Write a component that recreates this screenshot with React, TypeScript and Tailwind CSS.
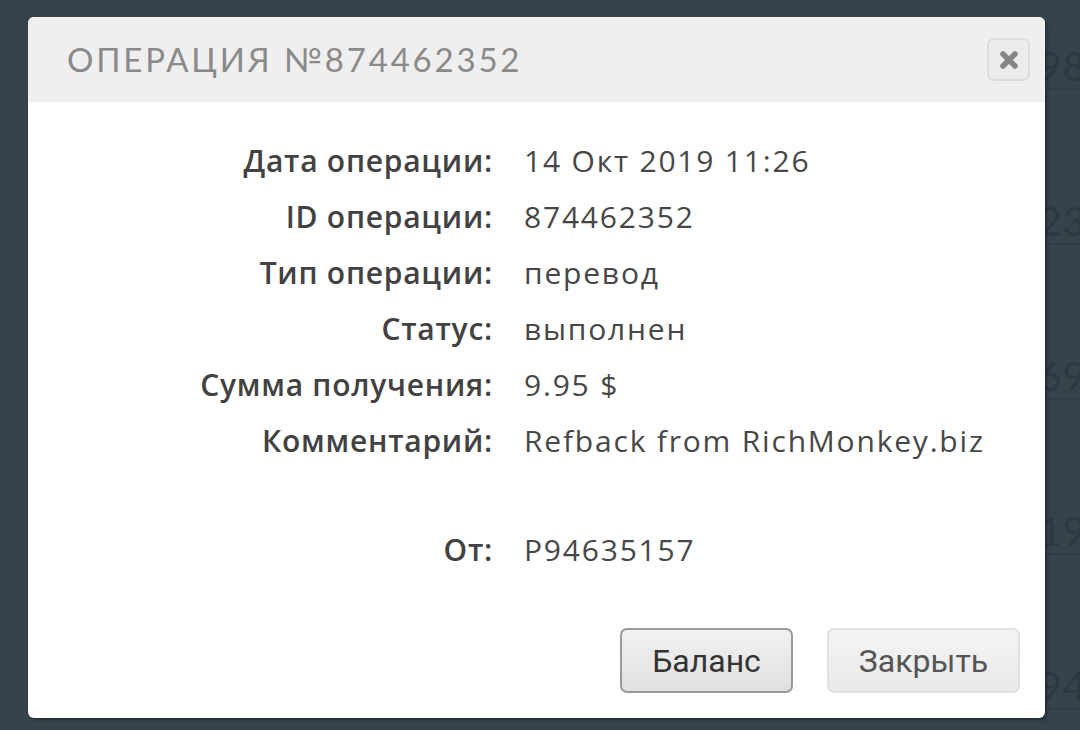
import React from 'react'

const rows = [
  { label: 'Дата операции:', value: '14 Окт 2019 11:26' },
  { label: 'ID операции:', value: '874462352' },
  { label: 'Тип операции:', value: 'перевод' },
  { label: 'Статус:', value: 'выполнен' },
  { label: 'Сумма получения:', value: '9.95 $' },
  { label: 'Комментарий:', value: 'Refback from RichMonkey.biz' },
]

// what peeks out from the page behind the dialog
const bgNumbers = ['1598', '4523', '7169', '2319', '5394']

export default function App() {
  return (
    <div className="relative w-[1080px] h-[730px] overflow-hidden bg-[#36434b]">
      <div className="flex flex-col pt-[44px] pl-[990px]">
        {bgNumbers.map((n) => (
          <div key={n} className="h-[155px]">
            <span className="inline-block text-[40px] leading-[44px] text-[#2d3941] border-b-2 border-dotted border-[#2d3941] tracking-wide" style={{ fontFamily: 'Lato, sans-serif' }}>
              {n}
            </span>
          </div>
        ))}
      </div>

      <div className="absolute left-[28px] top-[17px] w-[1017px] h-[701px] flex flex-col rounded-[6px] overflow-hidden bg-white shadow-[2px_2px_3px_rgba(0,0,0,0.35)]">
        <div className="h-[85px] shrink-0 bg-[#efefef] flex items-center justify-between pl-[39px] pr-[15px]">
          <h2 className="text-[33px] text-[#8a8a8a] tracking-[0.085em] uppercase" style={{ fontFamily: 'Lato, "Open Sans", sans-serif' }}>
            Операция №874462352
          </h2>
          <button className="w-[43px] h-[43px] flex items-center justify-center rounded-[7px] border-2 border-[#dcdcdc] bg-[#ececec]">
            <svg width="22" height="22" viewBox="0 0 22 22">
              <path d="M5 5 L17 17 M17 5 L5 17" stroke="#868686" strokeWidth="5.5" strokeLinecap="round" />
            </svg>
          </button>
        </div>

        <div className="flex-1 flex flex-col pt-[31px] pb-[25px] pr-[25px]" style={{ fontFamily: '"Open Sans", sans-serif' }}>
          <div className="grid grid-cols-[465px_1fr] gap-x-[31px] text-[30px] leading-[56px]">
            {rows.map((r) => (
              <React.Fragment key={r.label}>
                <div className="text-right font-semibold tracking-[0.025em] text-[#424242]">{r.label}</div>
                <div className="tracking-[0.06em] text-[#474747]">{r.value}</div>
              </React.Fragment>
            ))}
            <div className="col-span-2 h-[53px]" />
            <div className="text-right font-semibold tracking-[0.025em] text-[#424242]">От:</div>
            <div className="tracking-[0.06em] text-[#474747]">P94635157</div>
          </div>

          <div className="mt-auto flex justify-end gap-[34px]" style={{ fontFamily: 'Roboto, sans-serif' }}>
            <button className="w-[173px] h-[65px] rounded-[7px] border-2 border-[#9a9a9a] bg-gradient-to-b from-[#f1f1f1] to-[#e0e0e0] text-[32px] text-[#333]">
              Баланс
            </button>
            <button className="w-[193px] h-[65px] rounded-[7px] border-2 border-[#e0e0e0] bg-gradient-to-b from-[#f4f4f4] to-[#e9e9e9] text-[32px] text-[#555]">
              Закрыть
            </button>
          </div>
        </div>
      </div>
    </div>
  )
}
